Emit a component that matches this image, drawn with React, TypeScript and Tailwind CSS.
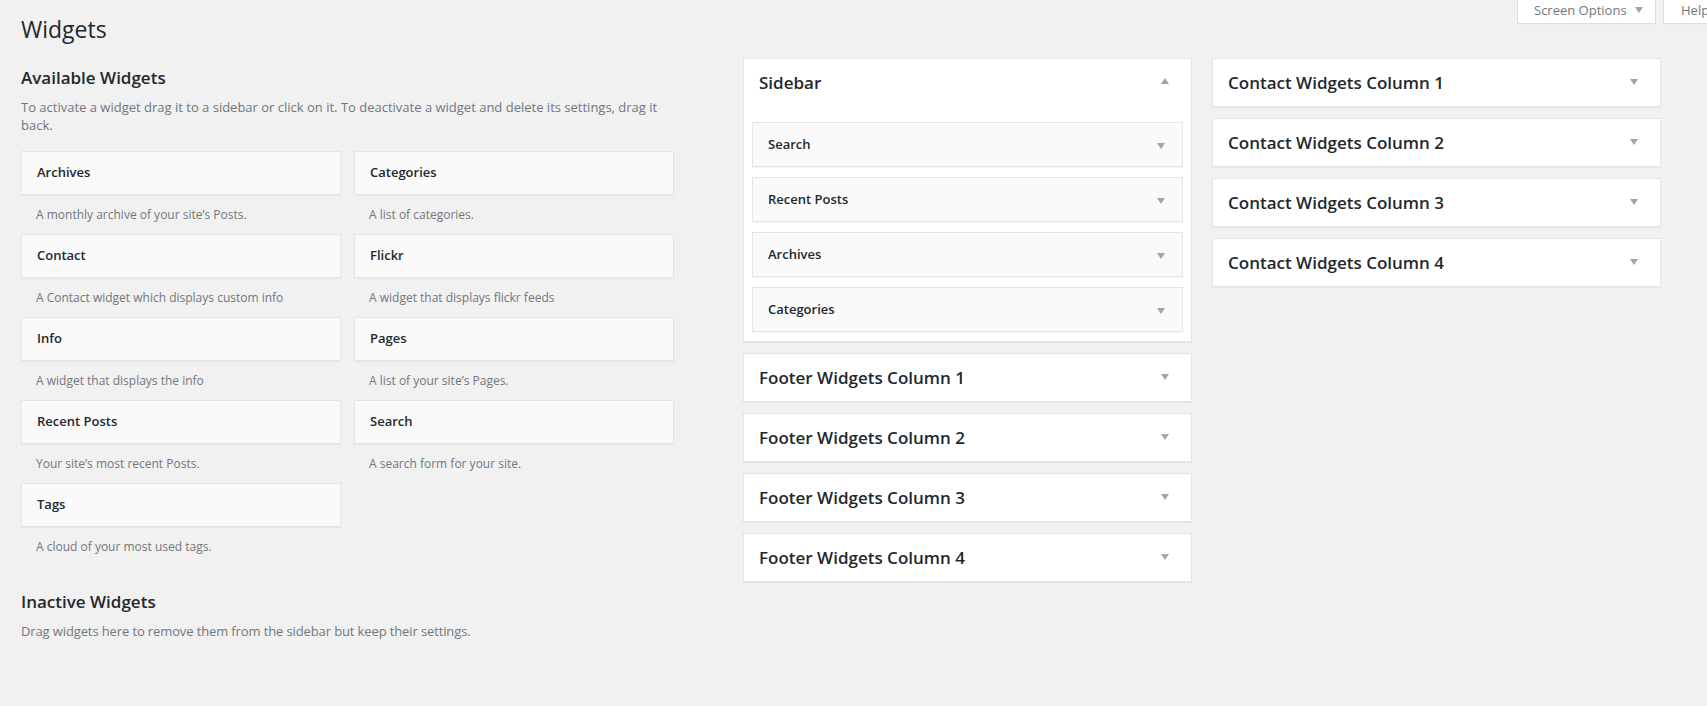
import React from "react";

const Arrow = ({ up = false, className = "" }: { up?: boolean; className?: string }) => (
  <svg width="8" height="6" viewBox="0 0 8 6" className={"shrink-0 " + className}>
    <polygon points={up ? "0,6 4,0 8,6" : "0,0 8,0 4,6"} fill="#a0a5aa" />
  </svg>
);

const available: [string, string][] = [
  ["Archives", "A monthly archive of your site\u2019s Posts."],
  ["Categories", "A list of categories."],
  ["Contact", "A Contact widget which displays custom info"],
  ["Flickr", "A widget that displays flickr feeds"],
  ["Info", "A widget that displays the info"],
  ["Pages", "A list of your site\u2019s Pages."],
  ["Recent Posts", "Your site\u2019s most recent Posts."],
  ["Search", "A search form for your site."],
  ["Tags", "A cloud of your most used tags."],
];

const sidebarWidgets = ["Search", "Recent Posts", "Archives", "Categories"];

const CollapsedArea = ({ title }: { title: string }) => (
  <div className="flex h-[49px] items-center justify-between border border-[#e5e5e5] bg-white pl-[15px] pr-[22px] shadow-[0_1px_1px_rgba(0,0,0,0.04)]">
    <h2 className="text-[17px] font-semibold text-[#23282d]">{title}</h2>
    <Arrow className="mb-[2px]" />
  </div>
);

export default function App() {
  return (
    <div className="min-h-screen w-full overflow-hidden bg-[#f1f1f1] font-['Open_Sans',sans-serif] text-[#23282d]">
      <div className="flex items-start">
        <h1 className="pl-[21px] pt-[14px] text-[23px] font-normal leading-[30px] text-[#23282d]">Widgets</h1>
        <div className="ml-auto mr-[-34px] flex gap-[7px]">
          <button className="flex h-[24px] w-[139px] items-start border-x border-b border-[#ddd] bg-white pl-[16px] pt-px text-[13px] leading-[19px] text-[#72777c] shadow-[0_1px_1px_-1px_rgba(0,0,0,0.1)]">
            <span>Screen Options</span>
            <Arrow className="ml-[8px] mt-[6px]" />
          </button>
          <button className="flex h-[24px] w-[78px] items-start border-x border-b border-[#ddd] bg-white pl-[17px] pt-px text-[13px] leading-[19px] text-[#72777c] shadow-[0_1px_1px_-1px_rgba(0,0,0,0.1)]">
            <span>Help</span>
            <Arrow className="ml-[8px] mt-[6px]" />
          </button>
        </div>
      </div>

      <div className="flex items-start pl-[21px]">
        <div className="w-[653px] shrink-0 pt-[22px]">
          <h2 className="text-[17px] font-semibold leading-[24px] text-[#23282d]">Available Widgets</h2>
          <p className="mt-[8px] text-[13px] leading-[18px] text-[#72777c]">
            To activate a widget drag it to a sidebar or click on it. To deactivate a widget and delete its settings, drag it back.
          </p>
          <div className="mt-[17px] grid grid-cols-[320px_320px] gap-x-[13px]">
            {available.map(([name, desc]) => (
              <div key={name}>
                <div className="flex h-[44px] items-center border border-[#e5e5e5] bg-[#fafafa] px-[15px] shadow-[0_1px_1px_rgba(0,0,0,0.04)]">
                  <h3 className="text-[13px] font-semibold text-[#23282d]">{name}</h3>
                </div>
                <div className="flex h-[39px] items-center px-[15px] text-[12px] text-[#72777c]">{desc}</div>
              </div>
            ))}
          </div>
          <h2 className="mt-[24px] text-[17px] font-semibold leading-[24px] text-[#23282d]">Inactive Widgets</h2>
          <p className="mt-[8px] text-[13px] leading-[18px] tracking-[-0.12px] text-[#72777c]">
            Drag widgets here to remove them from the sidebar but keep their settings.
          </p>
        </div>

        <div className="ml-[69px] mt-[14px] flex w-[449px] shrink-0 flex-col gap-[11px]">
          <div className="border border-[#e5e5e5] bg-white shadow-[0_1px_1px_rgba(0,0,0,0.04)]">
            <div className="flex h-[47px] items-center justify-between pl-[15px] pr-[22px]">
              <h2 className="text-[17px] font-semibold text-[#23282d]">Sidebar</h2>
              <Arrow up className="mb-[3px]" />
            </div>
            <div className="flex flex-col gap-[10px] px-[8px] pb-[9px] pt-[16px]">
              {sidebarWidgets.map((w) => (
                <div
                  key={w}
                  className="flex h-[45px] items-center justify-between border border-[#e5e5e5] bg-[#fafafa] pl-[15px] pr-[17px] shadow-[0_1px_1px_rgba(0,0,0,0.04)]"
                >
                  <h3 className="text-[13px] font-semibold text-[#23282d]">{w}</h3>
                  <Arrow className="mt-[2px]" />
                </div>
              ))}
            </div>
          </div>
          {[1, 2, 3, 4].map((n) => (
            <CollapsedArea key={n} title={`Footer Widgets Column ${n}`} />
          ))}
        </div>

        <div className="ml-[20px] mt-[14px] flex w-[449px] shrink-0 flex-col gap-[11px]">
          {[1, 2, 3, 4].map((n) => (
            <CollapsedArea key={n} title={`Contact Widgets Column ${n}`} />
          ))}
        </div>
      </div>
    </div>
  );
}
